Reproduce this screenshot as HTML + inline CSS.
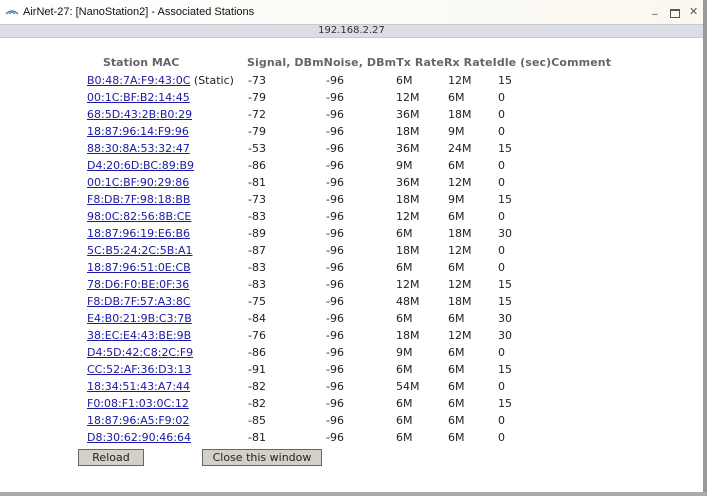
<!DOCTYPE html>
<html><head><style>
body{margin:0;width:707px;height:496px;background:#fff;position:relative;overflow:hidden;font-family:"DejaVu Sans","Liberation Sans",sans-serif;font-size:11px;color:#222}
.t{position:absolute;white-space:nowrap}
#title{position:absolute;left:0;top:0;width:703px;height:24px;background:linear-gradient(90deg,#fff,#fbf8f0)}
#addr{position:absolute;left:0;top:24px;width:703px;height:12px;background:#dcdce4;border-top:1px solid #c8c8d0;border-bottom:1px solid #c8c8d0;text-align:center;font-size:10px;line-height:12px;color:#333}
#rb{position:absolute;left:703px;top:0;width:4px;height:496px;background:#999}
#bb{position:absolute;left:0;top:492px;width:707px;height:4px;background:#aaa}
a{color:#1a1aa6;text-decoration:underline}
.h{font-weight:bold;color:#666}
.btn{position:absolute;top:449px;height:15px;background:#d4d0c8;border:1px solid #666;font-size:11px;text-align:center;line-height:15px}
</style></head><body>
<div id="title"></div>
<svg style="position:absolute;left:5px;top:9px" width="14" height="6"><path d="M1 5 Q7 -1 13 5" stroke="#4a7ab0" fill="none" stroke-width="1.3"/><path d="M4 5 Q7 2 10 5" stroke="#4a7ab0" fill="none"/></svg>
<div class="t" style="left:23px;top:6px;font-family:'Liberation Sans',sans-serif;font-size:11px;color:#111">AirNet-27: [NanoStation2] - Associated Stations</div>
<div class="t" style="left:652px;top:2px;font-size:11px;color:#555">_</div>
<div style="position:absolute;left:670px;top:9px;width:8px;height:6px;border:1px solid #555;border-top-width:2px"></div>
<div class="t" style="left:689px;top:5px;font-size:11px;color:#555">✕</div>
<div id="addr">192.168.2.27</div>
<div id="rb"></div><div id="bb"></div>
<div class="t h" style="left:103px;top:56px">Station MAC</div>
<div class="t h" style="left:247px;top:56px;letter-spacing:0.1px">Signal, DBmNoise, DBmTx RateRx RateIdle (sec)Comment</div>
<div id="rows"></div>
<script>
var d=[["B0:48:7A:F9:43:0C","-73","6M","12M","15"],["00:1C:BF:B2:14:45","-79","12M","6M","0"],["68:5D:43:2B:B0:29","-72","36M","18M","0"],["18:87:96:14:F9:96","-79","18M","9M","0"],["88:30:8A:53:32:47","-53","36M","24M","15"],["D4:20:6D:BC:89:B9","-86","9M","6M","0"],["00:1C:BF:90:29:86","-81","36M","12M","0"],["F8:DB:7F:98:18:BB","-73","18M","9M","15"],["98:0C:82:56:8B:CE","-83","12M","6M","0"],["18:87:96:19:E6:B6","-89","6M","18M","30"],["5C:B5:24:2C:5B:A1","-87","18M","12M","0"],["18:87:96:51:0E:CB","-83","6M","6M","0"],["78:D6:F0:BE:0F:36","-83","12M","12M","15"],["F8:DB:7F:57:A3:8C","-75","48M","18M","15"],["E4:B0:21:9B:C3:7B","-84","6M","6M","30"],["38:EC:E4:43:BE:9B","-76","18M","12M","30"],["D4:5D:42:C8:2C:F9","-86","9M","6M","0"],["CC:52:AF:36:D3:13","-91","6M","6M","15"],["18:34:51:43:A7:44","-82","54M","6M","0"],["F0:08:F1:03:0C:12","-82","6M","6M","15"],["18:87:96:A5:F9:02","-85","6M","6M","0"],["D8:30:62:90:46:64","-81","6M","6M","0"]];
var h="";d.forEach(function(r,i){var y=74+i*17.0;
h+='<div class="t" style="left:87px;top:'+y+'px"><a>'+r[0]+'</a>'+(i==0?' (Static)':'')+'</div>';
h+='<div class="t" style="left:248px;top:'+y+'px">'+r[1]+'</div>';
h+='<div class="t" style="left:326px;top:'+y+'px">-96</div>';
h+='<div class="t" style="left:396px;top:'+y+'px">'+r[2]+'</div>';
h+='<div class="t" style="left:448px;top:'+y+'px">'+r[3]+'</div>';
h+='<div class="t" style="left:498px;top:'+y+'px">'+r[4]+'</div>';});
document.getElementById("rows").innerHTML=h;
</script>
<div class="btn" style="left:78px;width:64px">Reload</div>
<div class="btn" style="left:202px;width:118px">Close this window</div>
</body></html>
